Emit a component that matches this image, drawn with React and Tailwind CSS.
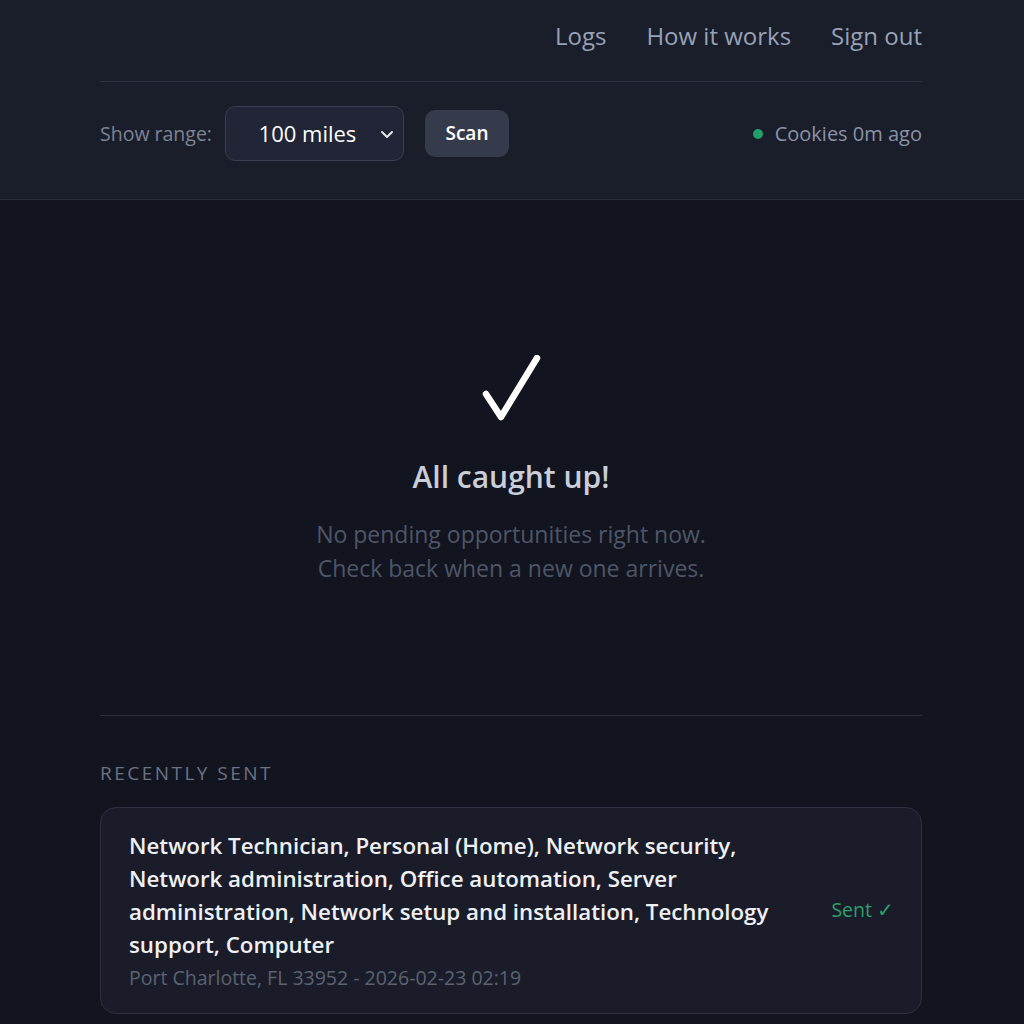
import React, { useState } from "react";

const font = { fontFamily: '"Open Sans", "Noto Sans", sans-serif' };

const App = () => {
  const [range, setRange] = useState("100");

  return (
    <div className="min-h-screen bg-[#12141f] text-[#c9ced8]" style={font}>
      {/* Header */}
      <header className="bg-[#1a1d2a] border-b border-[#2a2e3b]">
        <div className="ml-[100px] mr-[102px]">
          <nav className="h-[82px] pt-[20px] flex justify-end gap-[40px] border-b border-[#2f3342] text-[24px] leading-[32px] text-[#98a2b6]">
            <a href="#" className="hover:text-white">Logs</a>
            <a href="#" className="hover:text-white">How it works</a>
            <a href="#" className="hover:text-white">Sign out</a>
          </nav>

          <div className="flex items-center pt-[24px] pb-[38px]">
            <span className="text-[19.5px] text-[#7d8494] mr-[13px]">Show range:</span>
            <div className="relative">
              <select
                value={range}
                onChange={(e) => setRange(e.target.value)}
                className="appearance-none w-[179px] h-[55px] pl-[26px] pr-[40px] rounded-[10px] bg-[#212535] border border-[#3a3f51] text-[22px] text-white text-center focus:outline-none"
              >
                <option value="25">25 miles</option>
                <option value="50">50 miles</option>
                <option value="100">100 miles</option>
                <option value="250">250 miles</option>
              </select>
              <svg
                className="absolute right-[9px] top-[20px] pointer-events-none"
                width="16"
                height="16"
                viewBox="0 0 16 16"
                fill="none"
                stroke="#e5e7eb"
                strokeWidth="2"
                strokeLinecap="round"
                strokeLinejoin="round"
              >
                <path d="M3 6l5 5 5-5" />
              </svg>
            </div>
            <button className="ml-[21px] w-[84px] h-[47px] rounded-[10px] bg-[#363b4c] text-[19px] font-semibold text-white hover:bg-[#41475a]">
              Scan
            </button>
            <div className="ml-auto flex items-center gap-[12px] text-[20px] text-[#8a93a6]">
              <span className="w-[10px] h-[10px] rounded-full bg-[#22a06b]"></span>
              <span>Cookies 0m ago</span>
            </div>
          </div>
        </div>
      </header>

      <main className="ml-[100px] mr-[102px]">
        {/* Empty state */}
        <section className="pt-[155px] pb-[130px] flex flex-col items-center border-b border-[#2a2e3b]">
          <svg width="60" height="66" viewBox="0 0 60 66" fill="none">
            <path
              d="M5 39 L20 62 L56 3"
              stroke="#ffffff"
              strokeWidth="6.5"
              strokeLinecap="round"
              strokeLinejoin="round"
            />
          </svg>
          <h2 className="mt-[36px] text-[30px] leading-[40px] font-semibold text-[#c9ced8]">
            All caught up!
          </h2>
          <p className="mt-[20px] text-[23px] leading-[34px] text-[#4f5668] text-center">
            No pending opportunities right now.
            <br />
            Check back when a new one arrives.
          </p>
        </section>

        {/* Recently sent */}
        <section className="pt-[45px] pb-[12px]">
          <h3 className="text-[19px] leading-[24px] tracking-[0.13em] text-[#6b7385] uppercase">
            Recently sent
          </h3>
          <div className="mt-[22px] rounded-[16px] border border-[#2c3041] bg-[#1a1d29] pl-[28px] pr-[27px] pt-[21px] pb-[22px] flex items-center gap-[40px]">
            <div className="flex-1">
              <p className="text-[22.3px] leading-[33px] font-semibold text-[#eef0f4]">
                Network Technician, Personal (Home), Network security, Network administration, Office automation, Server administration, Network setup and installation, Technology support, Computer
              </p>
              <p className="mt-[4px] text-[19.5px] leading-[26px] text-[#5b6272]">
                Port Charlotte, FL 33952 - 2026-02-23 02:19
              </p>
            </div>
            <span className="shrink-0 text-[19.5px] font-medium text-[#2e9e6a]">Sent ✓</span>
          </div>
        </section>
      </main>
    </div>
  );
};

export default App;
